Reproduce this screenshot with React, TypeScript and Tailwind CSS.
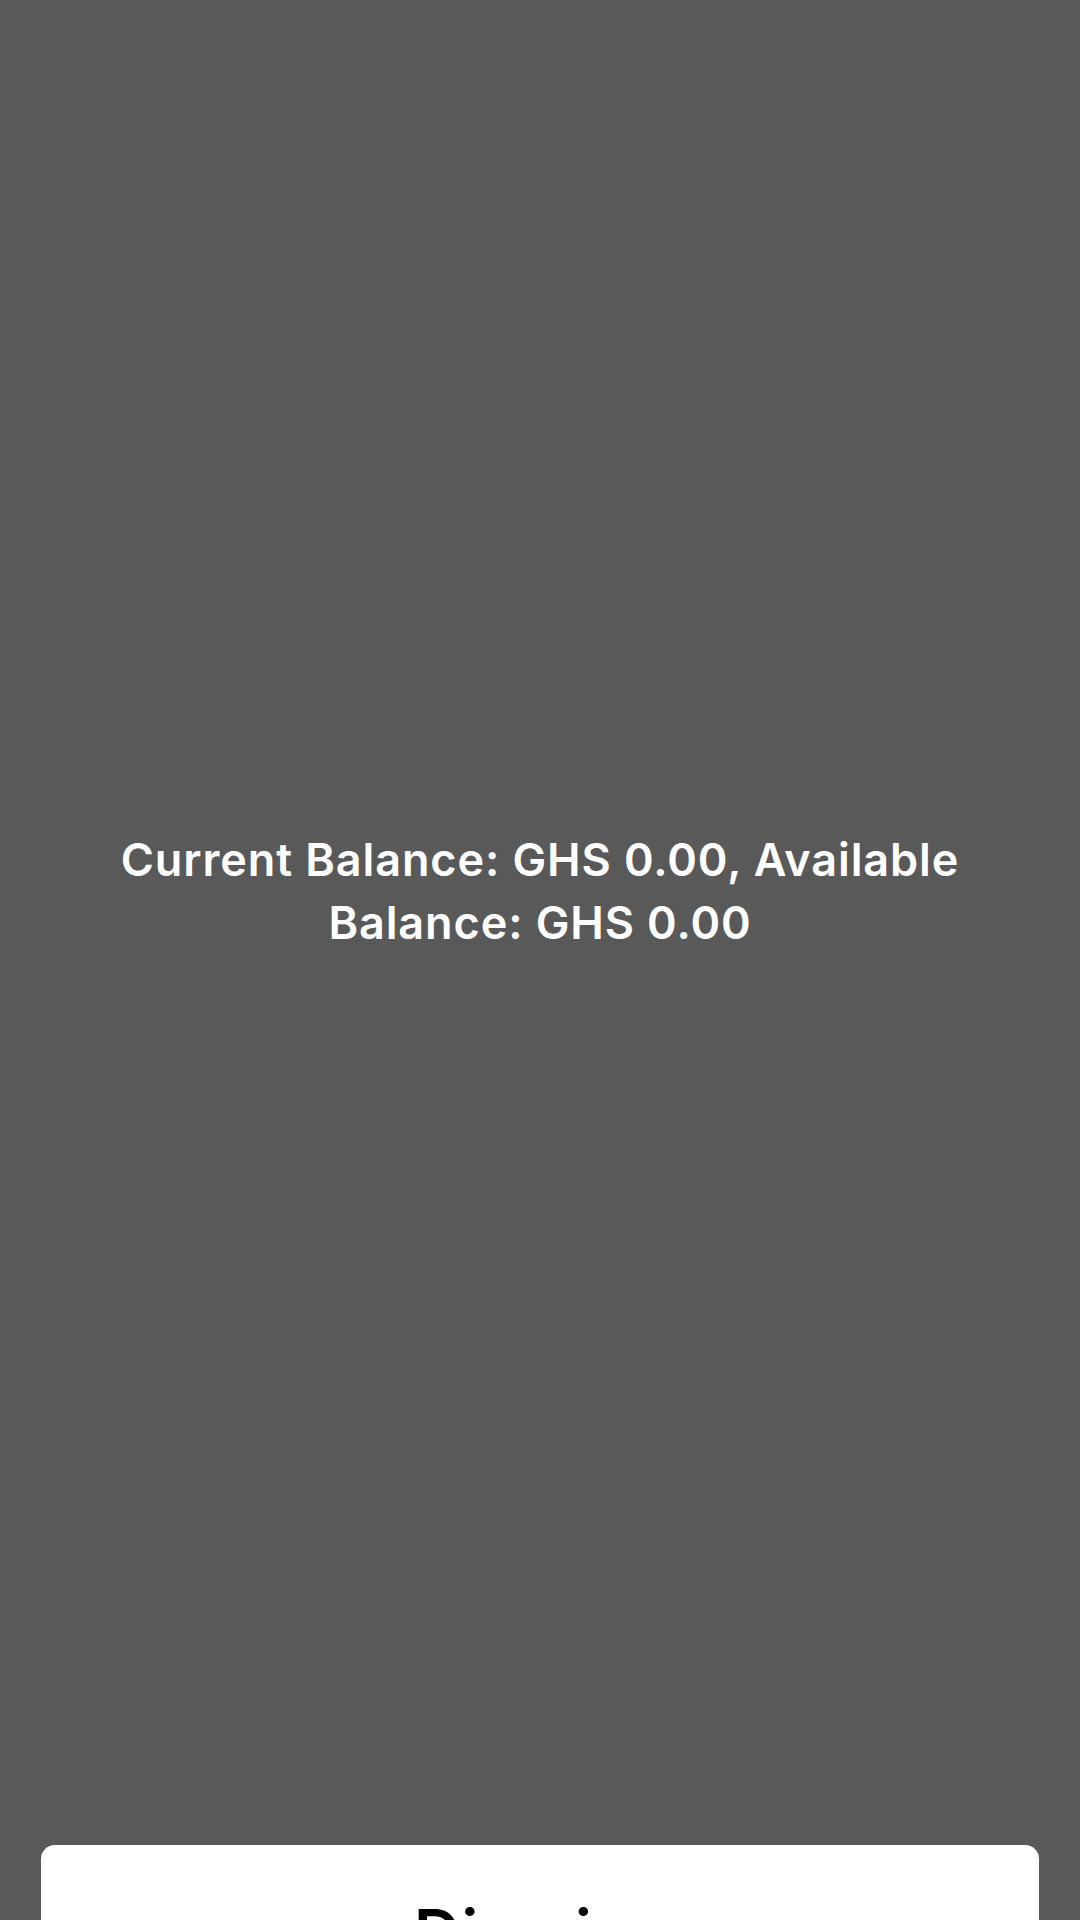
export default function App() {
  return (
    <div
      className="w-[1080px] h-[1920px] overflow-hidden bg-[#595959] flex flex-col"
      style={{ fontFamily: 'Inter, "Noto Sans", sans-serif' }}
    >
      <div className="h-[1781px] shrink-0 flex items-center justify-center px-[60px]">
        <p className="text-white text-center text-[45px] leading-[63px] font-semibold tracking-[0.02em]">
          Current Balance: GHS 0.00, Available Balance: GHS 0.00
        </p>
      </div>
      <div className="mt-[64px] mx-[41px] shrink-0 bg-white rounded-[14px] h-[200px] flex justify-center pt-[48px]">
        <span className="text-black text-[64px] leading-[80px] font-semibold tracking-[0.02em]">Dismiss</span>
      </div>
    </div>
  );
}
